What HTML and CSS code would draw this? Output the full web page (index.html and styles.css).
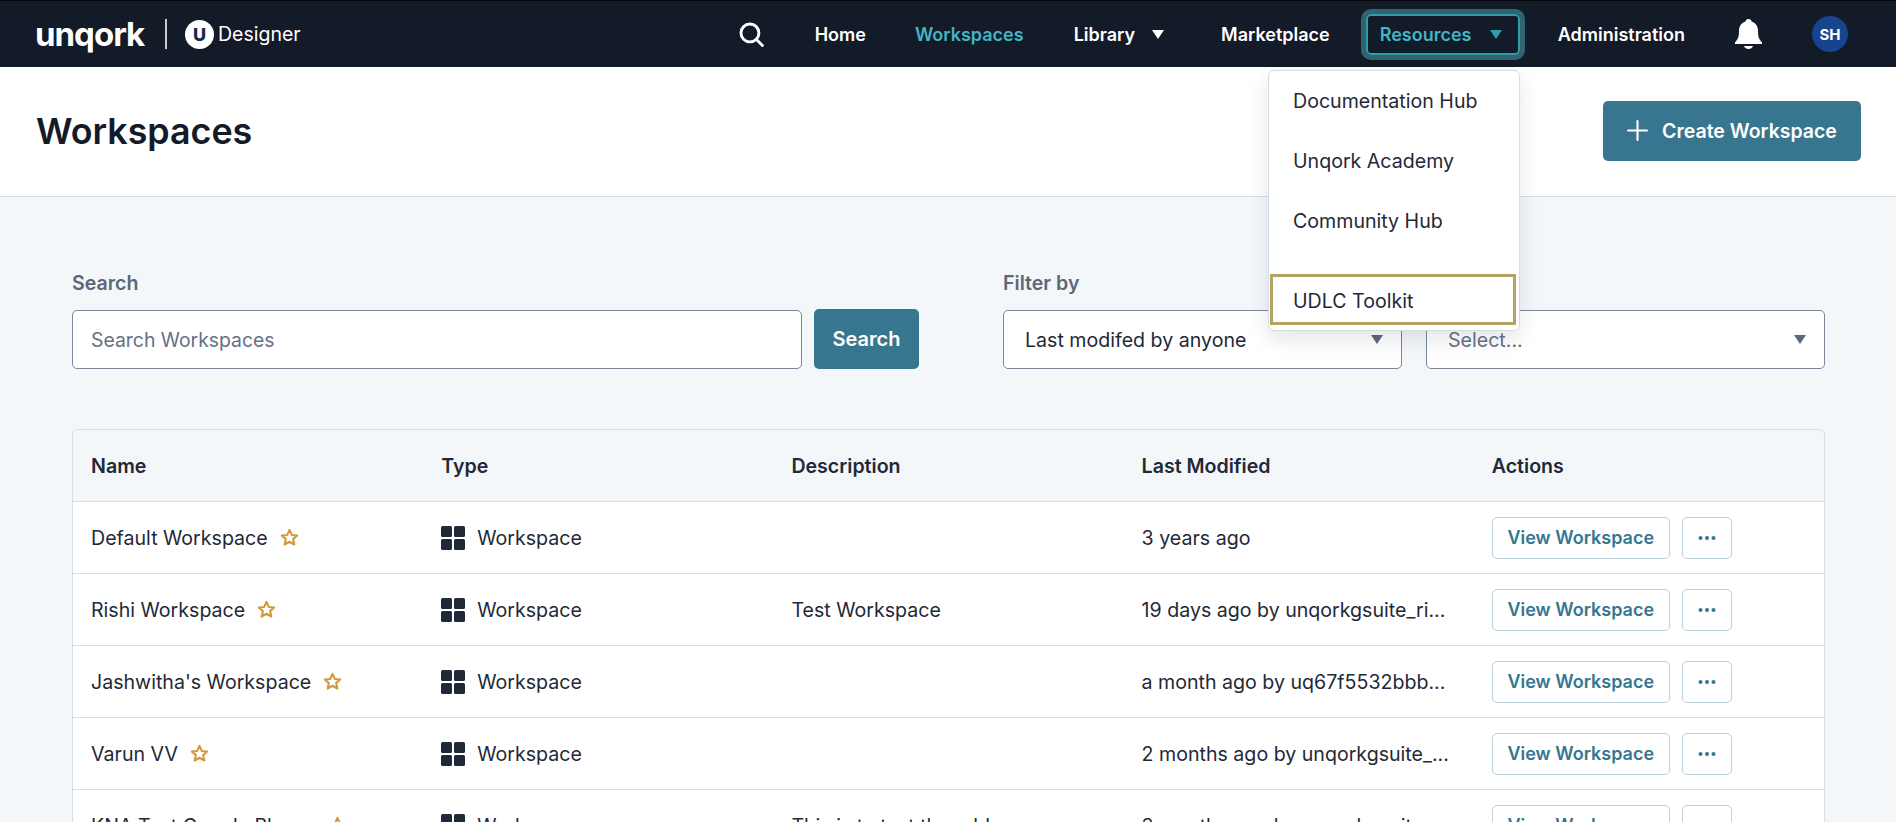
FILE: index.html
```html
<!DOCTYPE html>
<html lang="en">
  <head>
    <meta charset="UTF-8" />
    <meta name="viewport" content="width=device-width, initial-scale=1.0" />
    <title>Workspaces</title>
    <link rel="stylesheet" href="styles.css">
  </head>
  <body>
    <nav class="topbar">
      <div class="brand">
        <span class="brand-name">unqork</span>
        <span class="brand-divider"></span>
        <span class="brand-badge">U</span>
        <span class="brand-product">Designer</span>
      </div>
      <div class="nav-links">
        <svg class="nav-search" viewBox="0 0 24 24" fill="none" stroke="#fff" stroke-width="2.8" stroke-linecap="round">
          <circle cx="10.500" cy="10.500" r="8.600" />
          <line x1="17" y1="17" x2="22.500" y2="22.500" />
        </svg>
        <a class="nav-link home">Home</a>
        <a class="nav-link active">Workspaces</a>
        <a class="nav-link library">Library <span class="caret"></span></a>
        <a class="nav-link">Marketplace</a>
        <a class="nav-link open">Resources <span class="caret"></span></a>
        <a class="nav-link admin">Administration</a>
        <svg class="nav-bell" viewBox="0 0 27 30" fill="#fff">
          <path d="M13.500 0C15.300 0 16.500 1.200 16.800 2.800 C21 4 23 7.600 23 12 C23 17.500 24 20.500 27 23.200 V25 H0 V23.200 C3 20.500 4 17.500 4 12 C4 7.600 6 4 10.200 2.800 C10.500 1.200 11.700 0 13.500 0Z" />
          <path d="M9 27 H18 C17.400 29 15.600 30 13.500 30 C11.400 30 9.600 29 9 27Z" />
        </svg>
        <span class="avatar">SH</span>
      </div>
    </nav>

    <ul class="resources-menu">
      <li>Documentation Hub</li>
      <li>Unqork Academy</li>
      <li>Community Hub</li>
      <li class="focused">UDLC Toolkit</li>
    </ul>

    <header class="page-head">
      <h1>Workspaces</h1>
      <button class="create-btn">
        <svg viewBox="0 0 20 20" stroke="#fff" stroke-width="2" stroke-linecap="round">
          <line x1="10" y1="1" x2="10" y2="19" />
          <line x1="1" y1="10" x2="19" y2="10" />
        </svg>
        Create Workspace
      </button>
    </header>

    <main class="content">
      <section class="filters">
        <div class="search-group">
          <label>Search</label>
          <div class="search-row">
            <input class="search-input" placeholder="Search Workspaces" />
            <button class="search-btn">Search</button>
          </div>
        </div>
        <div class="filter-group">
          <label>Filter by</label>
          <div class="filter-row">
            <div class="select">Last modifed by anyone <span class="select-caret"></span></div>
            <div class="select placeholder">Select... <span class="select-caret"></span></div>
          </div>
        </div>
      </section>

      <table class="workspaces">
        <thead>
          <tr>
            <th>Name</th>
            <th>Type</th>
            <th>Description</th>
            <th>Last Modified</th>
            <th>Actions</th>
          </tr>
        </thead>
        <tbody id="rows"></tbody>
      </table>
    </main>

    <script>
      const workspaces = [
        ["Default Workspace", "", "3 years ago"],
        ["Rishi Workspace", "Test Workspace", "19 days ago by unqorkgsuite_ri..."],
        ["Jashwitha's Workspace", "", "a month ago by uq67f5532bbb..."],
        ["Varun VV", "", "2 months ago by unqorkgsuite_..."],
        ["KNA Test Google Places", "This is to test the address", "3 months ago by unqorkgsuite..."]
      ];

      const star = '<svg class="star" viewBox="0 0 20 20" fill="none" stroke="#d29a3c" stroke-width="2.200" stroke-linejoin="round"><path d="M10 2l2.400 5.300 5.700.6-4.300 3.800 1.300 5.700L10 14.500l-5.100 2.900 1.300-5.700L1.900 7.900l5.700-.6z"/></svg>';
      const grid = '<svg class="grid" viewBox="0 0 24 24" fill="#1f2937"><rect width="11" height="11" rx="1.500"/><rect x="13" width="11" height="11" rx="1.500"/><rect y="13" width="11" height="11" rx="1.500"/><rect x="13" y="13" width="11" height="11" rx="1.500"/></svg>';
      const dots = '<svg class="dots" viewBox="0 0 18 4" fill="#37768e"><circle cx="2.500" cy="2" r="2"/><circle cx="9" cy="2" r="2"/><circle cx="15.500" cy="2" r="2"/></svg>';

      document.getElementById("rows").innerHTML = workspaces.map(([name, desc, modified]) => `
        <tr>
          <td><span class="ws-name">${name} ${star}</span></td>
          <td><span class="ws-type">${grid} Workspace</span></td>
          <td>${desc}</td>
          <td>${modified}</td>
          <td><div class="actions"><button class="view-btn">View Workspace</button><button class="more-btn">${dots}</button></div></td>
        </tr>`).join("");
    </script>
  </body>
</html>
```
FILE: styles.css
```css
* {
  box-sizing: border-box;
}
html,
body {
  height: 822px;
  overflow: hidden;
}
body {
  margin: 0;
  background: #f4f7fa;
  color: #1f2937;
  font-family: Inter, "Liberation Sans", sans-serif;
  font-size: 19.6px;
  position: relative;
}
.topbar {
  height: 67px;
  background: #131a28;
  border-top: 1px solid #05070c;
  display: flex;
  align-items: center;
  justify-content: space-between;
  padding: 0 48px 0 35px;
  color: #fff;
}
.brand {
  display: flex;
  align-items: center;
}
.brand-name {
  font-weight: 700;
  font-size: 33px;
  letter-spacing: -1px;
  width: 130px;
}
.brand-divider {
  width: 2px;
  height: 30px;
  background: #c9ccd2;
}
.brand-badge {
  width: 29px;
  height: 29px;
  margin-left: 18px;
  border-radius: 50%;
  background: #fff;
  color: #15294b;
  font-weight: 800;
  font-size: 18px;
  display: flex;
  align-items: center;
  justify-content: center;
}
.brand-product {
  margin-left: 4px;
  font-size: 19.5px;
}
.nav-links {
  display: flex;
  align-items: center;
  gap: 51px;
}
.nav-search {
  width: 25px;
  height: 25px;
}
.nav-link {
  font-size: 18px;
  font-weight: 600;
  display: flex;
  align-items: center;
  color: #fff;
}
.nav-link.home {
  margin-right: -2px;
}
.nav-link.active {
  color: #43b5c4;
  margin-right: -1px;
}
.nav-link.library {
  margin-right: 6px;
}
.caret {
  width: 0;
  height: 0;
  margin-left: 17px;
  border-left: 6.5px solid transparent;
  border-right: 6.5px solid transparent;
  border-top: 9px solid currentColor;
}
.nav-link.open {
  color: #43b5c4;
  height: 41px;
  width: 154px;
  padding-left: 12px;
  margin-left: -15px;
  border: 2px solid #2f9daa;
  border-radius: 5px;
  box-shadow: 0 0 0 5px #306472;
}
.nav-link.open .caret {
  border-top-color: #2f9daa;
  margin-left: 18px;
}
.nav-link.admin {
  margin-left: -13px;
}
.nav-bell {
  width: 27px;
  height: 30px;
  margin-left: -1px;
}
.avatar {
  width: 36px;
  height: 36px;
  margin-left: -1px;
  border-radius: 50%;
  background: #17448f;
  font-size: 15px;
  font-weight: 700;
  display: flex;
  align-items: center;
  justify-content: center;
}
.page-head {
  height: 130px;
  background: #fff;
  border-bottom: 1px solid #d5dde5;
  display: flex;
  align-items: center;
  justify-content: space-between;
  padding: 0 35px 2px 36px;
}
.page-head h1 {
  margin: 0;
  font-size: 35.8px;
  font-weight: 600;
  color: #131a28;
}
.create-btn {
  width: 258px;
  height: 60px;
  border: none;
  border-radius: 5px;
  background: #37768e;
  color: #fff;
  font-family: inherit;
  font-size: 19.5px;
  font-weight: 600;
  display: flex;
  align-items: center;
  justify-content: center;
  gap: 14px;
}
.create-btn svg {
  width: 21px;
  height: 21px;
}
.content {
  padding: 0 71px 0 72px;
}
.filters {
  display: flex;
  gap: 84px;
  padding-top: 73px;
  height: 232px;
}
.search-group {
  width: 847px;
}
.filter-group {
  flex: 1;
}
.filters label {
  display: block;
  height: 39px;
  font-weight: 600;
  color: #5c6878;
  line-height: 26px;
}
.search-row,
.filter-row {
  display: flex;
  align-items: center;
  height: 60px;
}
.search-row {
  gap: 12px;
}
.filter-row {
  gap: 24px;
}
.search-input {
  width: 730px;
  height: 59px;
  margin-top: 1px;
  padding: 0 18px;
  border: 1px solid #7b8798;
  border-radius: 5px;
  background: #fff;
  font-family: inherit;
  font-size: 19.4px;
}
.search-input::placeholder {
  color: #657184;
  opacity: 1;
}
.search-btn {
  width: 105px;
  height: 60px;
  border: none;
  border-radius: 5px;
  background: #37768e;
  color: #fff;
  font-family: inherit;
  font-size: 20px;
  font-weight: 600;
}
.select {
  flex: 1;
  height: 59px;
  margin-top: 1px;
  padding: 0 18px 0 21px;
  border: 1px solid #7b8798;
  border-radius: 5px;
  background: #fff;
  display: flex;
  align-items: center;
  justify-content: space-between;
}
.select.placeholder {
  color: #657184;
}
.select-caret {
  width: 0;
  height: 0;
  border-left: 6px solid transparent;
  border-right: 6px solid transparent;
  border-top: 9px solid #5c6878;
}
.workspaces {
  width: 100%;
  table-layout: fixed;
  border-collapse: separate;
  border-spacing: 0;
  background: #fff;
  border: 1px solid #d5dde5;
  border-radius: 6px 6px 0 0;
}
.workspaces th {
  height: 72px;
  padding: 0 18px;
  background: #f4f7fa;
  border-bottom: 1px solid #d5dde5;
  text-align: left;
  font-weight: 600;
}
.workspaces th:first-child {
  border-top-left-radius: 6px;
}
.workspaces th:last-child {
  border-top-right-radius: 6px;
}
.workspaces td {
  height: 72px;
  padding: 0 18px;
  border-bottom: 1px solid #d5dde5;
  white-space: nowrap;
}
.ws-name,
.ws-type {
  display: flex;
  align-items: center;
}
.star {
  width: 19px;
  height: 19px;
  margin-left: 12px;
}
.grid {
  width: 24px;
  height: 24px;
  margin-right: 12px;
}
.actions {
  display: flex;
  gap: 12px;
}
.view-btn,
.more-btn {
  height: 42px;
  border: 1px solid #bcd3dd;
  border-radius: 5px;
  background: #fff;
  color: #37768e;
  font-family: inherit;
  font-size: 18px;
  font-weight: 600;
  display: flex;
  align-items: center;
  justify-content: center;
}
.view-btn {
  width: 178px;
}
.more-btn {
  width: 50px;
}
.dots {
  width: 18px;
  height: 4px;
}
.resources-menu {
  position: absolute;
  top: 70px;
  left: 1268px;
  width: 252px;
  height: 261px;
  margin: 0;
  padding: 0 1px 1px;
  list-style: none;
  background: #fff;
  border: 1px solid #d5dde5;
  border-radius: 6px;
  box-shadow: 0 8px 20px rgba(31, 41, 55, 0.12);
  z-index: 5;
}
.resources-menu li {
  height: 60px;
  padding-left: 23px;
  display: flex;
  align-items: center;
}
.resources-menu li.focused {
  height: 51px;
  margin: 23px 2px 0 0;
  padding: 3px 0 0 20px;
  border: 3px solid #b5a364;
}
```
